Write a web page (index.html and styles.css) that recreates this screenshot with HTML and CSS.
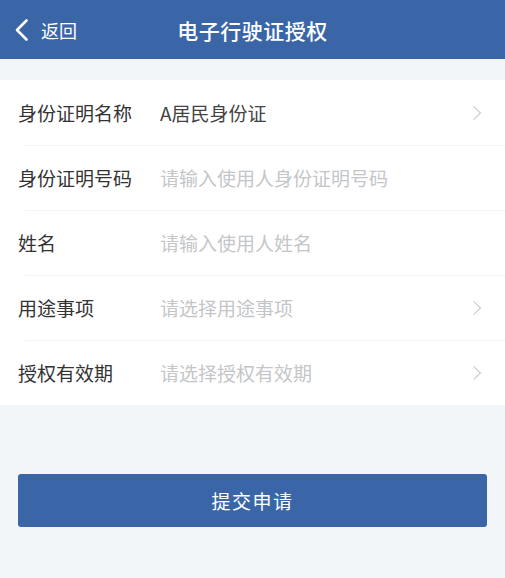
FILE: index.html
```html
<!DOCTYPE html>
<html lang="zh-CN">
<head>
    <meta charset="UTF-8">
    <meta name="viewport" content="width=device-width, initial-scale=1.0">
    <title>电子行驶证授权</title>
    <link rel="stylesheet" href="styles.css">
</head>
<body>
    <header class="nav-bar">
        <a class="back" href="#">
            <svg class="back-icon" width="15" height="24" viewBox="0 0 15 24">
                <path d="M12.5 2.5 L3 12 L12.5 21.5" fill="none" stroke="#fff" stroke-width="2.6" stroke-linecap="round" stroke-linejoin="round"/>
            </svg>
            <span>返回</span>
        </a>
        <h1 class="nav-title">电子行驶证授权</h1>
    </header>

    <div class="form-list">
        <div class="form-row">
            <span class="label">身份证明名称</span>
            <span class="value">A居民身份证</span>
            <span class="arrow"></span>
        </div>
        <div class="form-row">
            <span class="label">身份证明号码</span>
            <span class="value placeholder">请输入使用人身份证明号码</span>
        </div>
        <div class="form-row">
            <span class="label">姓名</span>
            <span class="value placeholder">请输入使用人姓名</span>
        </div>
        <div class="form-row">
            <span class="label">用途事项</span>
            <span class="value placeholder">请选择用途事项</span>
            <span class="arrow"></span>
        </div>
        <div class="form-row">
            <span class="label">授权有效期</span>
            <span class="value placeholder">请选择授权有效期</span>
            <span class="arrow"></span>
        </div>
    </div>

    <div class="actions">
        <button class="submit-btn">提交申请</button>
    </div>
</body>
</html>
```

FILE: styles.css
```css
body {
    margin: 0;
    background-color: #f3f6f9;
    font-family: "Noto Sans CJK SC", "Noto Sans", sans-serif;
    color: #333;
}
.nav-bar {
    position: relative;
    height: 59px;
    background-color: #3a66a8;
    display: flex;
    align-items: center;
    justify-content: center;
}
.back {
    position: absolute;
    left: 14px;
    top: 0;
    height: 100%;
    display: flex;
    align-items: center;
    gap: 12px;
    color: #fff;
    text-decoration: none;
    font-size: 18px;
}
.back-icon {
    display: block;
}
.nav-title {
    margin: 0;
    color: #fff;
    font-size: 21px;
    font-weight: 500;
    letter-spacing: 0.5px;
}
.form-list {
    margin-top: 21px;
    background-color: #fff;
}
.form-row {
    position: relative;
    height: 65px;
    display: flex;
    align-items: center;
    padding: 0 18px;
}
.form-row + .form-row::before {
    content: "";
    position: absolute;
    top: 0;
    left: 25px;
    right: 0;
    border-top: 1px solid #f1f3f5;
}
.label {
    width: 142px;
    font-size: 19px;
    color: #333;
}
.value {
    flex: 1;
    font-size: 19px;
    color: #444;
}
.value.placeholder {
    color: #c4c6c9;
}
.arrow {
    width: 9px;
    height: 9px;
    border-top: 1.5px solid #c6c6c6;
    border-right: 1.5px solid #c6c6c6;
    transform: rotate(45deg);
    margin-right: 8px;
}
.actions {
    padding: 69px 18px 0;
}
.submit-btn {
    display: block;
    width: 100%;
    height: 53px;
    border: none;
    border-radius: 3px;
    background-color: #3a66a8;
    color: #fff;
    font-family: inherit;
    font-size: 19px;
    letter-spacing: 1.5px;
}
```
